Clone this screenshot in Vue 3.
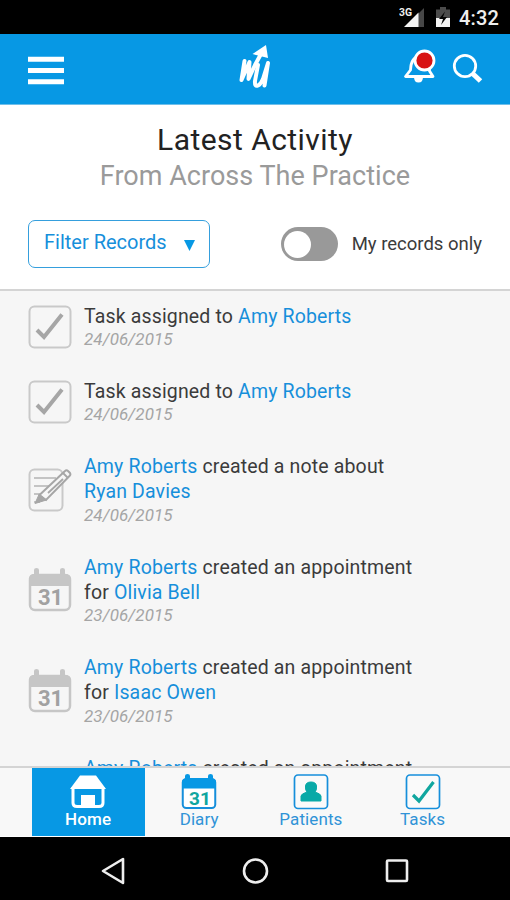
<script setup>
const person = (t) => ({ t, link: true })
const text = (t) => ({ t, link: false })
const booked = [person('Amy Roberts'), text(' created an appointment')]

const activity = [
  { icon: 'task', lines: [[text('Task assigned to '), person('Amy Roberts')]], date: '24/06/2015' },
  { icon: 'task', lines: [[text('Task assigned to '), person('Amy Roberts')]], date: '24/06/2015' },
  { icon: 'note', lines: [[person('Amy Roberts'), text(' created a note about')], [person('Ryan Davies')]], date: '24/06/2015' },
  { icon: 'diary', lines: [booked, [text('for '), person('Olivia Bell')]], date: '23/06/2015' },
  { icon: 'diary', lines: [booked, [text('for '), person('Isaac Owen')]], date: '23/06/2015' },
  { icon: '', lines: [booked], date: '' },
]
</script>

<template>
  <div class="screen">
    <div class="status">
      <svg class="signal" width="27" height="24" viewBox="0 0 27 24">
        <text x="0" y="11" class="net" textLength="13" lengthAdjust="spacingAndGlyphs">3G</text>
        <path d="M25 3V22H19V9z" fill="#474747" />
        <path d="M5 22L19.500 7.500V22z" fill="#f4f4f4" />
      </svg>
      <svg class="battery" width="14" height="20" viewBox="0 0 14 20">
        <path d="M0 2.500H4V0H10V2.500H14V20H0z" fill="#4c4c4c" />
        <path d="M0 11H14V20H0z" fill="#f4f4f4" />
        <path d="M9 4.500L3 12H7L5 18L11 10H7z" fill="#050505" />
      </svg>
      <span class="clock">4:32</span>
    </div>

    <header class="bar">
      <svg class="menu" width="36" height="30" viewBox="0 0 36 30">
        <path d="M0 3.200H36M0 14.500H36M0 25.800H36" stroke="#fff" stroke-width="5" />
      </svg>
      <svg class="logo" width="34" height="48" viewBox="0 0 34 48">
        <g fill="none" stroke="#fff" stroke-width="4" stroke-linecap="round" stroke-linejoin="round">
          <path d="M6.500 18L3.500 37L11.500 19L10.500 36L17 22L24 9" />
          <path d="M20 22L17 38Q16.500 44 20 42.500Q23 41 25 36L30 20L26.500 42.500" />
        </g>
        <path d="M14.500 11L28 2L30 15z" fill="#fff" />
      </svg>
      <div class="actions">
        <svg width="34" height="36" viewBox="0 0 34 36">
          <path d="M2.500 27.500H30L26.500 22Q27 8 17 7Q8 8 7.500 21z" fill="none" stroke="#fff" stroke-width="2.800" stroke-linejoin="round" />
          <path d="M11 28H20Q20 33.500 15.500 33.500T11 28z" fill="#fff" />
          <circle cx="21.500" cy="11.500" r="9.500" fill="#d81414" stroke="#fff" stroke-width="2.800" />
        </svg>
        <svg width="32" height="32" viewBox="0 0 32 32">
          <circle cx="13" cy="13" r="10.700" fill="none" stroke="#fff" stroke-width="2.800" />
          <path d="M20.500 20.500L28.500 28" stroke="#fff" stroke-width="5" />
        </svg>
      </div>
    </header>

    <section class="intro">
      <h1>Latest Activity</h1>
      <h2>From Across The Practice</h2>
      <div class="controls">
        <button class="filter">
          <span>Filter Records</span>
          <svg width="11" height="11" viewBox="0 0 11 11"><path d="M0 0H11L5.500 11z" fill="#0798e4" /></svg>
        </button>
        <div class="toggle"><i></i></div>
        <span class="only">My records only</span>
      </div>
    </section>

    <main class="feed">
      <article v-for="(item, i) in activity" :key="i" :class="{ tall: item.lines.length > 1 }">
        <svg v-if="item.icon === 'task'" class="glyph" width="44" height="44" viewBox="0 0 44 44">
          <rect x="1.500" y="1.500" width="41" height="41" rx="5" fill="none" stroke="#c9c9c9" stroke-width="2" />
          <path d="M9 25L16 32L34 9.500" fill="none" stroke="#a6a6a6" stroke-width="4" />
        </svg>
        <svg v-else-if="item.icon === 'note'" class="glyph" width="44" height="44" viewBox="0 0 44 44">
          <rect x="1.500" y="1.500" width="33" height="41" rx="5" fill="none" stroke="#c9c9c9" stroke-width="2" />
          <path d="M6 10H28M6 18H25M6 26H17M6 34H12" stroke="#c4c4c4" stroke-width="2" />
          <path d="M11.500 27L37 3Q38.500 1.500 40 3L42 5Q43 6.500 41.500 8L18 32z" fill="#f6f6f6" stroke="#a6a6a6" stroke-width="2" />
          <path d="M35 5L40 10M20 25L35 11" stroke="#a6a6a6" stroke-width="1.800" />
          <path d="M7 35.500L11 26.500L18.500 32z" fill="#a6a6a6" stroke="#a6a6a6" stroke-width="1" />
        </svg>
        <svg v-else-if="item.icon === 'diary'" class="glyph" width="44" height="44" viewBox="0 0 44 44">
          <rect x="2" y="7" width="40" height="35" rx="5" fill="none" stroke="#c6c6c6" stroke-width="2.500" />
          <path d="M1 18V11Q1 6 6 6V2Q6 0 8.500 0T11 2V6H32V2Q32 0 34.500 0T37 2V6Q43 6 43 11V18z" fill="#c6c6c6" />
          <text x="22.500" y="37" text-anchor="middle" class="day" fill="#a1a1a1">31</text>
        </svg>
        <div v-else class="blank"></div>
        <div class="copy">
          <p v-for="(line, j) in item.lines" :key="j"><span v-for="(part, k) in line" :key="k" :class="{ link: part.link }">{{ part.t }}</span></p>
          <time v-if="item.date">{{ item.date }}</time>
        </div>
      </article>
    </main>

    <nav class="tabs">
      <a class="active">
        <svg width="36" height="36" viewBox="0 0 36 36">
          <path d="M10 1.500H26L36 15H0z" fill="#fff" />
          <path d="M3 13V29Q3 32.500 7 32.500H29Q33 32.500 33 29V13" fill="none" stroke="#fff" stroke-width="3" />
          <path d="M11 21H25V33H11z" fill="#fff" />
        </svg>
        <span>Home</span>
      </a>
      <a>
        <svg width="36" height="36" viewBox="0 0 36 36">
          <rect x="1.750" y="5" width="32.500" height="29" rx="3.500" fill="#fff" stroke="#168fdb" stroke-width="2" />
          <path d="M1 14.500V8Q1 5 4 5V2Q4 0 6.500 0T9 2V4H27V2Q27 0 29.500 0T32 2V5Q35 5 35 8V14.500z" fill="#0798e4" />
          <text x="19" y="30.500" text-anchor="middle" class="day small" fill="#10a69f">31</text>
        </svg>
        <span>Diary</span>
      </a>
      <a>
        <svg width="36" height="36" viewBox="0 0 36 36">
          <rect x="1.500" y="1" width="33" height="33.500" rx="3.500" fill="#fafafa" stroke="#168fdb" stroke-width="1.700" />
          <path d="M8 27V22Q8 20 14 18Q12 16 12.500 12Q13 8 18 8T23.500 12Q24 16 22 18Q28 20 28 22V27z" fill="#09a9a7" stroke="#09a9a7" stroke-width="1" stroke-linejoin="round" />
        </svg>
        <span>Patients</span>
      </a>
      <a>
        <svg width="36" height="36" viewBox="0 0 36 36">
          <rect x="1.500" y="1" width="33" height="33.500" rx="3.500" fill="#fafafa" stroke="#168fdb" stroke-width="1.700" />
          <path d="M8 21L14 27L28.500 8" fill="none" stroke="#10a69f" stroke-width="3.200" />
        </svg>
        <span>Tasks</span>
      </a>
    </nav>

    <footer class="system">
      <svg width="24" height="28" viewBox="0 0 24 28"><path d="M22 2V26L2 14z" fill="none" stroke="#eee" stroke-width="2.600" stroke-linejoin="round" /></svg>
      <svg width="28" height="28" viewBox="0 0 28 28"><circle cx="14.500" cy="14" r="11.500" fill="none" stroke="#eee" stroke-width="2.600" /></svg>
      <svg width="24" height="28" viewBox="0 0 24 28"><rect x="2" y="3.500" width="20" height="20.500" rx="1" fill="none" stroke="#eee" stroke-width="2.600" /></svg>
    </footer>
  </div>
</template>

<style>
body { background: #000; }
</style>

<style scoped>
* { box-sizing: border-box; }
.screen { width: 510px; height: 900px; display: flex; flex-direction: column; overflow: hidden; background: #f6f6f6; color: #3b3b3b; font-family: Roboto, sans-serif; }
svg { display: block; flex: none; }
.status { height: 34px; flex: none; background: #000; display: flex; justify-content: flex-end; align-items: flex-start; padding: 5px 11px 0 0; color: #eee; }
.signal { margin-right: 10px; }
.net { font-size: 11px; font-weight: 700; fill: #eee; }
.battery { margin: 2px 9px 0 0; }
.clock { width: 40px; font-size: 20px; line-height: 26px; font-weight: 500; letter-spacing: 0.2px; white-space: nowrap; }
.bar { height: 71px; flex: none; background: #0798e4; border-bottom: 1px solid #6fbfea; display: grid; grid-template-columns: 1fr 34px 1fr; align-items: start; padding: 0 28px; }
.menu { margin-top: 22px; }
.logo { margin-top: 9px; }
.actions { display: flex; justify-content: flex-end; gap: 15px; margin-top: 15px; }
.actions svg + svg { margin-top: 4px; margin-right: -2px; }
.intro { height: 186px; flex: none; background: #fff; border-bottom: 2px solid #d4d4d4; padding-top: 16px; text-align: center; }
h1, h2, p { margin: 0; }
h1 { color: #222; font-size: 30px; line-height: 38px; font-weight: 400; letter-spacing: 0.45px; }
h2 { color: #9a9a9a; font-size: 27px; line-height: 35px; font-weight: 400; letter-spacing: 0.03px; }
.controls { display: flex; align-items: center; padding: 26px 28px 0; }
.filter { width: 182px; height: 48px; border: 1.500px solid #359fdd; border-radius: 7px; background: #fff; padding: 0 14px 4px 15px; display: flex; align-items: center; justify-content: space-between; color: #168fdb; font: 400 20px/24px Roboto, sans-serif; }
.filter svg { margin-top: 6px; }
.toggle { width: 57px; height: 34px; margin-left: 71px; border-radius: 17px; background: #999; padding: 4px 3px; }
.toggle i { display: block; width: 27px; height: 27px; border-radius: 50%; background: #fff; }
.only { margin-left: 14px; font-size: 18.500px; white-space: nowrap; }
.feed { height: 475px; flex: none; overflow: hidden; padding: 13px 28px 0; }
article { height: 75px; display: flex; gap: 12px; }
article.tall { height: 100.500px; }
.glyph { margin-top: 1px; }
.tall .glyph { margin-top: 13.500px; }
.blank { width: 44px; }
.copy { font-size: 19.500px; line-height: 25.300px; letter-spacing: 0.15px; white-space: pre; }
.link { color: #168fdb; }
time { display: block; color: #a5a5a5; font-size: 17px; line-height: 21px; font-style: italic; letter-spacing: 0.1px; }
.day { font-size: 22px; font-weight: 700; letter-spacing: 0; }
.small { font-size: 19px; }
.tabs { height: 71px; flex: none; border-top: 2px solid #d4d4d4; border-bottom: 1px solid #fff; display: grid; grid-template-columns: repeat(4, 1fr); padding: 0 31.500px; background: #f8f8f8; }
.tabs a { display: flex; flex-direction: column; align-items: center; padding-top: 6px; color: #3093d7; font-size: 17px; line-height: 18px; letter-spacing: 0.1px; }
.tabs .active { margin-right: -1.500px; background: #0798e4; color: #fff; font-weight: 500; }
.system { height: 63px; flex: none; background: #000; display: flex; align-items: center; justify-content: center; gap: 116px; padding-top: 4px; }
</style>
